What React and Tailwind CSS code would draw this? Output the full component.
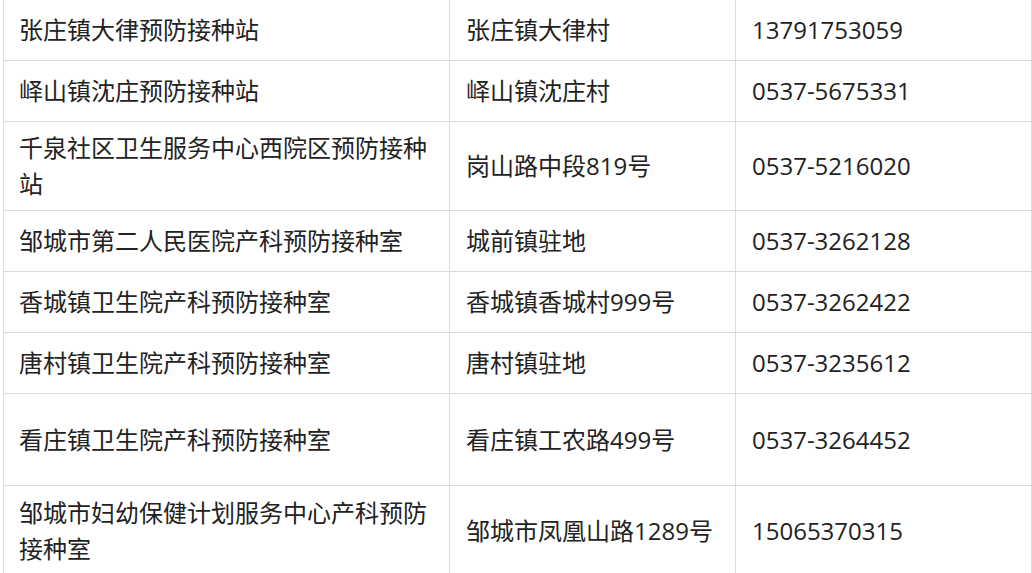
const ROWS = [
  { name: ['张庄镇大律预防接种站'], addr: '张庄镇大律村', tel: '13791753059', h: 'h-[61px]' },
  { name: ['峄山镇沈庄预防接种站'], addr: '峄山镇沈庄村', tel: '0537-5675331', h: 'h-[61px]' },
  { name: ['千泉社区卫生服务中心西院区预防接种站'], addr: '岗山路中段819号', tel: '0537-5216020', h: 'h-[89px]' },
  { name: ['邹城市第二人民医院产科预防接种室'], addr: '城前镇驻地', tel: '0537-3262128', h: 'h-[61px]' },
  { name: ['香城镇卫生院产科预防接种室'], addr: '香城镇香城村999号', tel: '0537-3262422', h: 'h-[61px]' },
  { name: ['唐村镇卫生院产科预防接种室'], addr: '唐村镇驻地', tel: '0537-3235612', h: 'h-[61px]' },
  { name: ['看庄镇卫生院产科预防接种室'], addr: '看庄镇工农路499号', tel: '0537-3264452', h: 'h-[92px]' },
  { name: ['邹城市妇幼保健计划服务中心产科预防接种室'], addr: '邹城市凤凰山路1289号', tel: '15065370315', h: 'h-[90px]' },
]

// vaccination sites list, the top of the table is scrolled just off screen
export default function App() {
  return (
    <div className="w-[1032px] h-[573px] overflow-hidden bg-white pl-[3px]">
      <table
        className="-mt-px w-[1028px] table-fixed border-collapse text-[24px] leading-[36px] text-[#222]"
        style={{ fontFamily: '"Open Sans", "Noto Sans CJK SC", sans-serif' }}
      >
        <colgroup>
          <col className="w-[446px]" />
          <col className="w-[286px]" />
          <col className="w-[296px]" />
        </colgroup>
        <tbody>
          {ROWS.map(r => (
            <tr key={r.tel} className={r.h}>
              <td className="border border-[#dcdcdc] pl-[15px] pr-[14px] align-middle">{r.name}</td>
              <td className="border border-[#dcdcdc] pl-[16px] pr-[10px] align-middle">{r.addr}</td>
              <td className="border border-[#dcdcdc] pl-[16px] pr-[10px] align-middle">{r.tel}</td>
            </tr>
          ))}
        </tbody>
      </table>
    </div>
  )
}
